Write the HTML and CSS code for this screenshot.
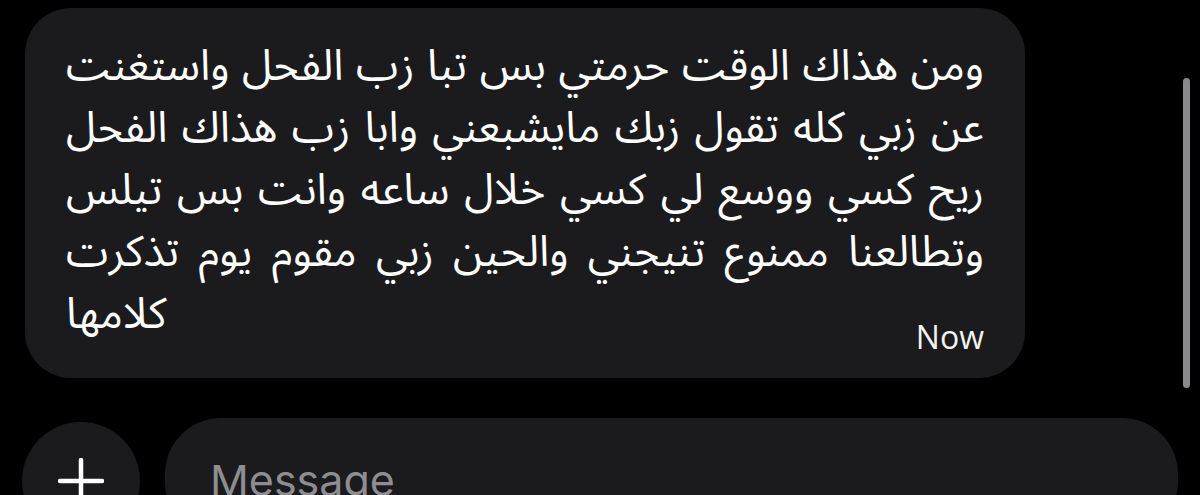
FILE: index.html
```html
<!DOCTYPE html>
<html lang="ar">
<head>
<meta charset="utf-8">
<title>Chat</title>
<link rel="stylesheet" href="styles.css">
</head>
<body>
<div class="screen">
  <div class="thread">
    <div class="bubble">
      <div class="line" dir="rtl">ومن هذاك الوقت حرمتي بس تبا زب الفحل واستغنت</div>
      <div class="line" dir="rtl">عن زبي كله تقول زبك مايشبعني وابا زب هذاك الفحل</div>
      <div class="line" dir="rtl">ريح كسي ووسع لي كسي خلال ساعه وانت بس تيلس</div>
      <div class="line" dir="rtl">وتطالعنا ممنوع تنيجني والحين زبي مقوم يوم تذكرت</div>
      <div class="last-row">
        <span class="last" dir="rtl">كلامها</span>
        <span class="time">Now</span>
      </div>
    </div>
  </div>
  <div class="composer">
    <div class="plus">
      <svg width="46" height="46" viewBox="0 0 46 46"><path d="M23 2V44M2 23H44" stroke="#fff" stroke-width="4.5" stroke-linecap="round" fill="none"/></svg>
    </div>
    <div class="input">Message</div>
  </div>
  <div class="scrollbar"></div>
</div>
</body>
</html>
```
FILE: styles.css
```css
* { box-sizing: border-box; }
html, body { margin: 0; padding: 0; background: #000; }
body { width: 1200px; height: 495px; overflow: hidden; }
.screen { position: relative; width: 1200px; height: 495px; padding: 8px 0 0 0; }
.thread { padding-left: 25px; }
.bubble {
  width: 1000px;
  height: 370px;
  background: #1b1b1d;
  border-radius: 46px;
  padding: 28px 41px 0 41px;
  color: #fff;
  font-family: "Noto Sans Arabic", "DejaVu Sans", "Noto Sans", sans-serif;
  font-size: 43px;
}
.line {
  height: 62px;
  line-height: 62px;
  white-space: nowrap;
  text-align: justify;
  text-align-last: justify;
}
.last-row {
  display: flex;
  justify-content: space-between;
  align-items: flex-end;
  height: 62px;
}
.last { line-height: 62px; }
.time {
  font-family: "Open Sans", "Inter", sans-serif;
  font-size: 32px;
  line-height: 40px;
  color: #f2f2f2;
  margin-bottom: -11px;
}
.composer {
  display: flex;
  gap: 25px;
  padding-left: 22px;
  margin-top: 40px;
}
.plus {
  width: 118px;
  height: 118px;
  flex: none;
  border-radius: 50%;
  background: #1b1b1d;
  margin-top: 4px;
  display: flex;
  align-items: center;
  justify-content: center;
}
.input {
  width: 1013px;
  height: 120px;
  background: #1b1b1d;
  border-radius: 56px;
  padding: 36px 0 0 45px;
  font-family: "Inter", "Liberation Sans", sans-serif;
  font-size: 43px;
  color: #8d8d92;
}
.scrollbar {
  position: absolute;
  left: 1183px;
  top: 78px;
  width: 7px;
  height: 310px;
  border-radius: 4px;
  background: #8a8a8c;
}
```
